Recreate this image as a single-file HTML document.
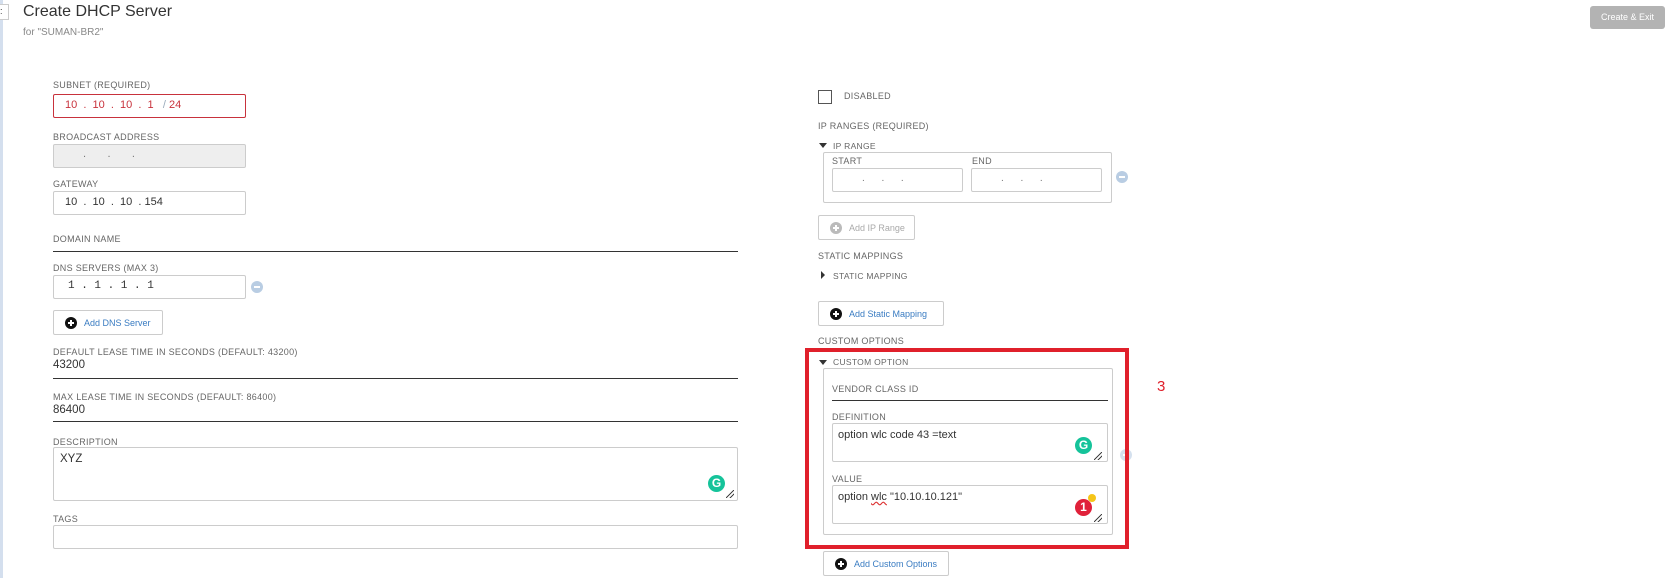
<!DOCTYPE html>
<html><head><meta charset="utf-8"><style>
*{box-sizing:border-box;margin:0;padding:0}
body{width:1673px;height:578px;background:#fff;font-family:"Liberation Sans",sans-serif;position:relative;overflow:hidden;color:#333}
.a{position:absolute}
.lb{position:absolute;font-size:9px;color:#666;letter-spacing:.3px;white-space:nowrap}
.in{position:absolute;border:1px solid #ccc;border-radius:2px;background:#fff}
.ip{position:absolute;font-size:11px;color:#333;white-space:nowrap}
.ln{position:absolute;height:1px;background:#333}
.btn{position:absolute;border:1px solid #ccc;border-radius:2px;background:#fff;font-size:9px;color:#3a7cc2;white-space:nowrap}
.btn i{position:absolute;width:12px;height:12px;border-radius:50%;background:#111;top:50%;margin-top:-6px;left:11px}
.btn i:before{content:"";position:absolute;left:3px;top:5px;width:6px;height:2px;background:#fff}
.btn i:after{content:"";position:absolute;left:5px;top:3px;width:2px;height:6px;background:#fff}
.btn span{position:absolute;left:30px;top:50%;transform:translateY(-50%)}
.mn{position:absolute;width:12px;height:12px;border-radius:50%;background:#b9cde3}
.mn:after{content:"";position:absolute;left:3px;top:5px;width:6px;height:2px;background:#fff}
.tri{position:absolute;width:0;height:0;border-left:4px solid transparent;border-right:4px solid transparent;border-top:5px solid #333}
.g{position:absolute;width:17px;height:17px;border-radius:50%;background:#15c39a;color:#fff;font-size:12px;font-weight:bold;text-align:center;line-height:17px}
.rs{position:absolute;width:8px;height:8px;background:linear-gradient(135deg,transparent 45%,#444 46%,#444 54%,transparent 55%,transparent 70%,#444 71%,#444 79%,transparent 80%)}
</style></head><body>
<div class="a" style="left:0;top:0;width:3px;height:578px;background:#d4dfee"></div>
<div class="a" style="left:0;top:4px;width:9px;height:16px;border:1px solid #ccc;border-left:none;background:#fff;font-size:9px;line-height:13px">:</div>
<div class="a" style="left:23px;top:3px;font-size:16px;color:#333">Create DHCP Server</div>
<div class="a" style="left:23px;top:27px;font-size:10px;color:#888">for "SUMAN-BR2"</div>
<div class="a" style="left:1590px;top:6px;width:75px;height:23px;background:#b3b3b3;border-radius:3px;color:#fff;font-size:9px;text-align:center;line-height:23px">Create &amp; Exit</div>

<div class="lb" style="left:53px;top:80px">SUBNET (REQUIRED)</div>
<div class="in" style="left:53px;top:94px;width:193px;height:24px;border-color:#c8323c"></div>
<div class="ip" style="left:65px;top:99px;color:#c8323c">10 &nbsp;. &nbsp;10 &nbsp;. &nbsp;10 &nbsp;. &nbsp;1 &nbsp;&nbsp;<span style="color:#9ab">/</span> 24</div>
<div class="lb" style="left:53px;top:132px">BROADCAST ADDRESS</div>
<div class="in" style="left:53px;top:144px;width:193px;height:24px;background:#eee"></div>
<div class="ip" style="left:83px;top:148px;color:#777">. &nbsp;&nbsp;&nbsp;&nbsp;&nbsp;&nbsp;. &nbsp;&nbsp;&nbsp;&nbsp;&nbsp;&nbsp;.</div>
<div class="lb" style="left:53px;top:179px">GATEWAY</div>
<div class="in" style="left:53px;top:191px;width:193px;height:24px"></div>
<div class="ip" style="left:65px;top:196px">10 &nbsp;. &nbsp;10 &nbsp;. &nbsp;10 &nbsp;. 154</div>
<div class="lb" style="left:53px;top:234px">DOMAIN NAME</div>
<div class="ln" style="left:53px;top:251px;width:685px"></div>
<div class="lb" style="left:53px;top:263px">DNS SERVERS (MAX 3)</div>
<div class="in" style="left:53px;top:275px;width:193px;height:24px"></div>
<div class="ip" style="left:68px;top:280px;font-family:'Liberation Mono',monospace">1 . 1 . 1 . 1</div>
<div class="mn" style="left:251px;top:281px"></div>
<div class="btn" style="left:53px;top:310px;width:110px;height:25px"><i></i><span>Add DNS Server</span></div>
<div class="lb" style="left:53px;top:347px">DEFAULT LEASE TIME IN SECONDS (DEFAULT: 43200)</div>
<div class="a" style="left:53px;top:359px;font-size:11.5px">43200</div>
<div class="ln" style="left:53px;top:378px;width:685px"></div>
<div class="lb" style="left:53px;top:392px">MAX LEASE TIME IN SECONDS (DEFAULT: 86400)</div>
<div class="a" style="left:53px;top:404px;font-size:11.5px">86400</div>
<div class="ln" style="left:53px;top:421px;width:685px"></div>
<div class="lb" style="left:53px;top:437px">DESCRIPTION</div>
<div class="in" style="left:53px;top:447px;width:685px;height:54px"></div>
<div class="a" style="left:60px;top:453px;font-size:11.5px">XYZ</div>
<div class="g" style="left:708px;top:475px">G</div>
<div class="rs" style="left:726px;top:490px"></div>
<div class="lb" style="left:53px;top:514px">TAGS</div>
<div class="in" style="left:53px;top:525px;width:685px;height:24px"></div>

<div class="a" style="left:818px;top:90px;width:14px;height:14px;border:1px solid #555"></div>
<div class="lb" style="left:844px;top:91px">DISABLED</div>
<div class="lb" style="left:818px;top:121px">IP RANGES (REQUIRED)</div>
<div class="tri" style="left:819px;top:143px"></div>
<div class="lb" style="left:833px;top:141px;font-size:8.5px">IP RANGE</div>
<div class="a" style="left:823px;top:152px;width:289px;height:51px;border:1px solid #ccc;border-radius:2px"></div>
<div class="lb" style="left:832px;top:156px">START</div>
<div class="lb" style="left:972px;top:156px">END</div>
<div class="in" style="left:832px;top:168px;width:131px;height:24px"></div>
<div class="in" style="left:971px;top:168px;width:131px;height:24px"></div>
<div class="ip" style="left:862px;top:173px;color:#777;font-size:10px">. &nbsp;&nbsp;&nbsp;&nbsp;&nbsp;. &nbsp;&nbsp;&nbsp;&nbsp;&nbsp;.</div>
<div class="ip" style="left:1001px;top:173px;color:#777;font-size:10px">. &nbsp;&nbsp;&nbsp;&nbsp;&nbsp;. &nbsp;&nbsp;&nbsp;&nbsp;&nbsp;.</div>
<div class="mn" style="left:1116px;top:171px"></div>
<div class="btn" style="left:818px;top:215px;width:97px;height:25px;color:#aaa"><i style="background:#bbb"></i><span>Add IP Range</span></div>
<div class="lb" style="left:818px;top:251px">STATIC MAPPINGS</div>
<div class="a" style="left:821px;top:271px;width:0;height:0;border-top:4px solid transparent;border-bottom:4px solid transparent;border-left:4px solid #333"></div>
<div class="lb" style="left:833px;top:271px;font-size:8.5px">STATIC MAPPING</div>
<div class="btn" style="left:818px;top:301px;width:126px;height:25px"><i></i><span>Add Static Mapping</span></div>
<div class="lb" style="left:818px;top:336px">CUSTOM OPTIONS</div>
<div class="tri" style="left:819px;top:360px"></div>
<div class="lb" style="left:833px;top:357px;font-size:8.5px">CUSTOM OPTION</div>
<div class="a" style="left:823px;top:368px;width:290px;height:167px;border:1px solid #ccc;border-radius:2px"></div>
<div class="lb" style="left:832px;top:384px">VENDOR CLASS ID</div>
<div class="ln" style="left:832px;top:400px;width:276px"></div>
<div class="lb" style="left:832px;top:412px">DEFINITION</div>
<div class="in" style="left:832px;top:423px;width:276px;height:39px"></div>
<div class="a" style="left:838px;top:429px;font-size:11px">option wlc code 43 =text</div>
<div class="g" style="left:1075px;top:437px">G</div>
<div class="rs" style="left:1094px;top:452px"></div>
<div class="lb" style="left:832px;top:474px">VALUE</div>
<div class="in" style="left:832px;top:485px;width:276px;height:39px"></div>
<div class="a" style="left:838px;top:491px;font-size:11px">option <span style="text-decoration:underline wavy #d33">wlc</span> "10.10.10.121"</div>
<div class="g" style="left:1075px;top:499px;background:#e0213a">1</div>
<div class="a" style="left:1088px;top:494px;width:8px;height:8px;border-radius:50%;background:#f5c518"></div>
<div class="rs" style="left:1094px;top:514px"></div>
<div class="mn" style="left:1120px;top:449px;opacity:.6"></div>
<div class="a" style="left:805px;top:348px;width:324px;height:201px;border:4px solid #e0202b"></div>
<div class="btn" style="left:823px;top:551px;width:126px;height:25px"><i></i><span>Add Custom Options</span></div>
<div class="a" style="left:1157px;top:378px;font-size:15px;color:#e0202b">3</div>
</body></html>
